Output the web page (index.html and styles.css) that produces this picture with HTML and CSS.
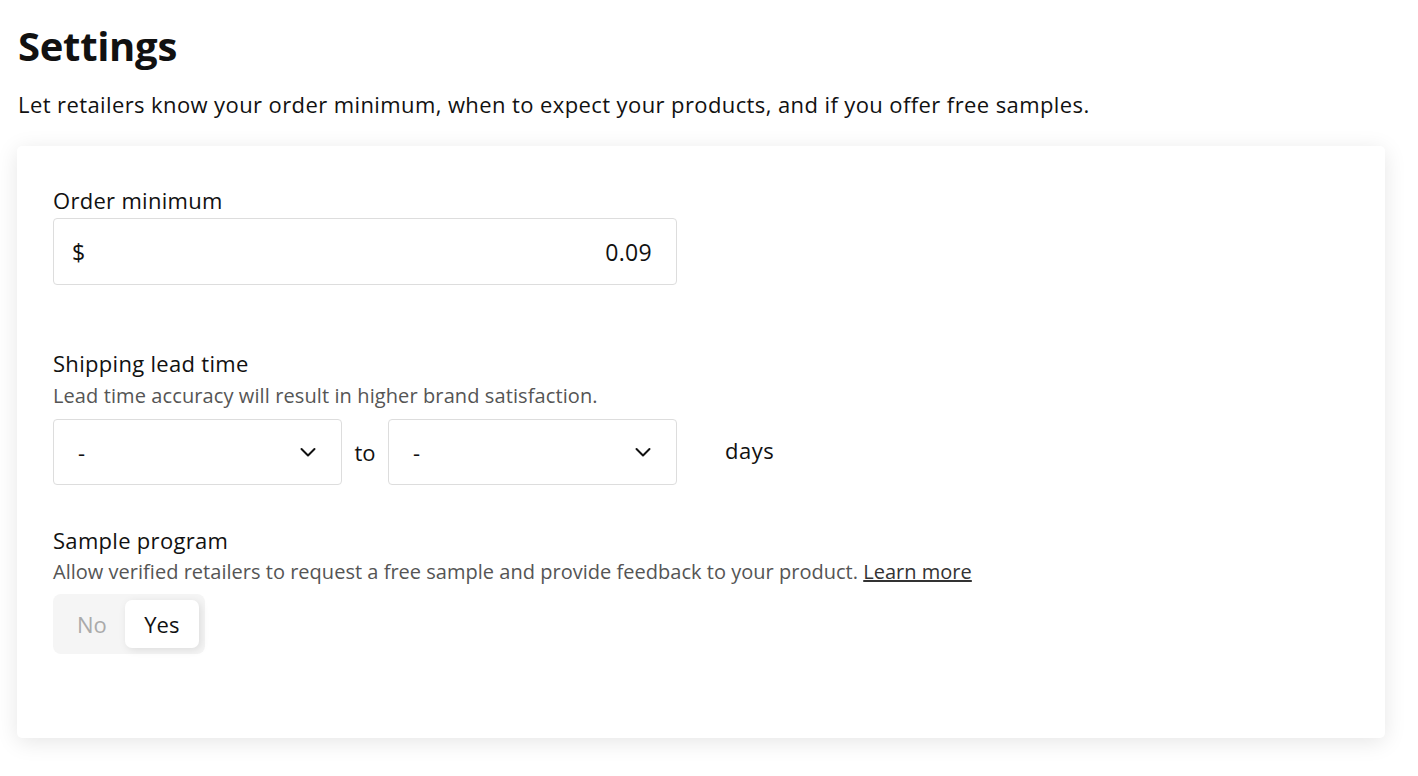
FILE: index.html
```html
<!DOCTYPE html>
<html lang="en">
<head>
    <meta charset="UTF-8">
    <meta name="viewport" content="width=device-width, initial-scale=1.0">
    <title>Settings</title>
    <link rel="stylesheet" href="styles.css">
</head>
<body>
    <div class="page">
        <h1>Settings</h1>
        <p class="intro">Let retailers know your order minimum, when to expect your products, and if you offer free samples.</p>

        <div class="card">
            <div class="field">
                <label class="label">Order minimum</label>
                <div class="money-input">
                    <span class="currency">$</span>
                    <span class="amount">0.09</span>
                </div>
            </div>

            <div class="field lead-time">
                <label class="label">Shipping lead time</label>
                <p class="help">Lead time accuracy will result in higher brand satisfaction.</p>
                <div class="range-row">
                    <div class="select">
                        <span>-</span>
                        <svg class="chevron" width="18" height="18" viewBox="0 0 18 18"><path d="M2.5 6l6.5 6.5 6.5-6.5" fill="none" stroke="#111" stroke-width="2" stroke-linecap="round" stroke-linejoin="round"/></svg>
                    </div>
                    <span class="to">to</span>
                    <div class="select">
                        <span>-</span>
                        <svg class="chevron" width="18" height="18" viewBox="0 0 18 18"><path d="M2.5 6l6.5 6.5 6.5-6.5" fill="none" stroke="#111" stroke-width="2" stroke-linecap="round" stroke-linejoin="round"/></svg>
                    </div>
                    <span class="days">days</span>
                </div>
            </div>

            <div class="field samples">
                <label class="label">Sample program</label>
                <p class="help">Allow verified retailers to request a free sample and provide feedback to your product. <a href="#">Learn more</a></p>
                <div class="toggle">
                    <span class="option">No</span>
                    <span class="option active">Yes</span>
                </div>
            </div>
        </div>
    </div>
</body>
</html>
```

FILE: styles.css
```css
body {
    margin: 0;
    padding: 0;
    background: #fff;
    color: #111;
    font-family: 'Open Sans', 'Noto Sans', sans-serif;
}

.page {
    padding: 20px 33px 30px 17px;
}

h1 {
    margin: 0 0 0 1px;
    font-size: 40px;
    line-height: 52px;
    font-weight: 700;
    letter-spacing: -0.3px;
}

.intro {
    margin: 17px 0 27px 1px;
    font-size: 22px;
    line-height: 30px;
    letter-spacing: 0.4px;
}

.card {
    background: #fff;
    border-radius: 5px;
    box-shadow: 0 4px 22px rgba(0, 0, 0, 0.1);
    padding: 40px 36px 84px 36px;
}

.label {
    display: block;
    font-size: 22px;
    line-height: 28px;
    letter-spacing: 0.3px;
}

.help {
    margin: 0;
    font-size: 20px;
    line-height: 26px;
    color: #555;
    letter-spacing: 0.1px;
}

.samples .help {
    letter-spacing: 0.02px;
}

.help a {
    color: #333;
    text-decoration: underline;
}

.money-input {
    margin-top: 4px;
    width: 624px;
    height: 67px;
    box-sizing: border-box;
    border: 1px solid #ddd;
    border-radius: 4px;
    display: flex;
    align-items: center;
    justify-content: space-between;
    padding: 0 24px 0 18px;
    font-size: 23px;
    letter-spacing: 0.3px;
}

.lead-time {
    margin-top: 64px;
}

.lead-time .label {
    margin-bottom: 6px;
}

.range-row {
    margin-top: 10px;
    display: flex;
    align-items: center;
}

.select {
    width: 289px;
    height: 66px;
    box-sizing: border-box;
    border: 1px solid #ddd;
    border-radius: 4px;
    display: flex;
    align-items: center;
    justify-content: space-between;
    padding: 0 24px 0 24px;
    font-size: 22px;
}

.to {
    width: 46px;
    text-align: center;
    font-size: 22px;
}

.days {
    margin-left: 48px;
    font-size: 22px;
    letter-spacing: 0.5px;
    margin-top: -4px;
}

.samples {
    margin-top: 41px;
}

.samples .label {
    margin-bottom: 5px;
}

.toggle {
    display: inline-flex;
    align-items: center;
    background: #f5f5f5;
    border-radius: 8px;
    padding: 6px;
    margin-top: 9px;
}

.option {
    font-size: 22px;
    color: #aaa;
    padding: 0 18px;
    line-height: 48px;
}

.option.active {
    background: #fff;
    color: #111;
    padding: 0 19.5px;
    border-radius: 7px;
    box-shadow: 2px 2px 8px rgba(0, 0, 0, 0.1);
}
```
